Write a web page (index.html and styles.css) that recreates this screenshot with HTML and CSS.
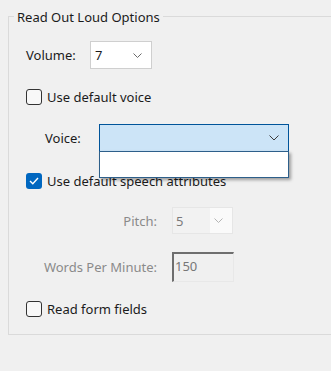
FILE: index.html
```html
<!DOCTYPE html>
<html lang="en">
<head>
    <meta charset="UTF-8">
    <title>Read Out Loud Options</title>
    <link rel="stylesheet" href="styles.css">
</head>
<body>
    <div class="group">
        <div class="legend">Read Out Loud Options</div>

        <div class="row volume">
            <span class="label">Volume:</span>
            <div class="combo combo-volume">
                <span>7</span>
                <svg class="chev" width="9" height="5" viewBox="0 0 9 5"><polyline points="0.5,0.5 4.5,4.5 8.5,0.5" fill="none" stroke="#6a6a6a" stroke-width="1"/></svg>
            </div>
        </div>

        <div class="row check">
            <span class="box"></span>
            <span>Use default voice</span>
        </div>

        <div class="row voice">
            <span class="label">Voice:</span>
            <div class="combo combo-voice">
                <span></span>
                <svg class="chev" width="10" height="6" viewBox="0 0 10 6"><polyline points="0.5,0.5 5,5 9.5,0.5" fill="none" stroke="#3c3c3c" stroke-width="1"/></svg>
                <!-- open list of the voice dropdown -->
                <div class="popup"></div>
            </div>
        </div>

        <div class="row check">
            <span class="box checked">
                <svg width="10" height="8" viewBox="0 0 10 8"><polyline points="1,4 3.8,6.8 9,1" fill="none" stroke="#fff" stroke-width="1.4"/></svg>
            </span>
            <span>Use default speech attributes</span>
        </div>

        <div class="row pitch">
            <span class="label dim">Pitch:</span>
            <div class="combo combo-pitch">
                <span class="val">5</span>
                <svg class="chev" width="9" height="5" viewBox="0 0 9 5"><polyline points="0.5,0.5 4.5,4.5 8.5,0.5" fill="none" stroke="#b4b4b4" stroke-width="1"/></svg>
            </div>
        </div>

        <div class="row wpm">
            <span class="label dim">Words Per Minute:</span>
            <div class="field">150</div>
        </div>

        <div class="row check last">
            <span class="box"></span>
            <span>Read form fields</span>
        </div>
    </div>
</body>
</html>
```

FILE: styles.css
```css
* {
    margin: 0;
    padding: 0;
    box-sizing: border-box;
}

body {
    background-color: #f0f0f0;
    font-family: 'Noto Sans', 'Open Sans', sans-serif;
    font-size: 13px;
    color: #1b1b1b;
    width: 331px;
    height: 371px;
    overflow: hidden;
}

.group {
    margin: 16px 0 0 8px;
    height: 319px;
    border: 1px solid #dadada;
    border-right: none;
}

.legend {
    width: max-content;
    margin: -9px 0 0 5px;
    padding: 0 3px;
    line-height: 18px;
    background-color: #f0f0f0;
}

.row {
    display: flex;
    align-items: center;
    margin-left: 17px;
}

.volume {
    margin-top: 15px;
    height: 28px;
}

.volume .label {
    width: 64px;
}

.combo {
    position: relative;
    display: flex;
    align-items: center;
    justify-content: space-between;
    height: 100%;
    border: 1px solid #cfcfcf;
    background-color: #fff;
    padding: 0 9px 0 4px;
}

.combo-volume {
    width: 62px;
}

.check {
    height: 16px;
    gap: 5px;
}

.check:nth-of-type(3) {
    margin-top: 20px;
}

.box {
    display: flex;
    align-items: center;
    justify-content: center;
    width: 16px;
    height: 16px;
    border: 1px solid #333;
    border-radius: 3px;
    background-color: #f8f8f8;
}

.box.checked {
    border: none;
    background-color: #0067c0;
}

.voice {
    margin-top: 19px;
    height: 28px;
    margin-left: 36px;
}

.voice .label {
    width: 54px;
}

.combo-voice {
    width: 190px;
    border-color: #00549a;
    background-color: #cce4f7;
    padding-right: 9px;
}

.popup {
    position: absolute;
    left: -1px;
    top: 26px;
    width: 190px;
    height: 27px;
    background-color: #fff;
    border: 1px solid #2d5f8a;
    box-shadow: 2px 2px 3px rgba(0, 0, 0, 0.35);
}

.voice + .check {
    margin-top: 21px;
}

.dim {
    color: #8a8a8a;
}

.pitch {
    margin-top: 18px;
    height: 27px;
}

.pitch .label,
.wpm .label {
    width: 130px;
    margin-left: 1px;
    text-align: right;
}

.combo-pitch {
    width: 61px;
    margin-left: 15px;
    padding: 0 0 0 0;
    border-color: #e6e6e6;
    background-color: #fafafa;
}

.combo-pitch .val {
    display: flex;
    align-items: center;
    width: 37px;
    height: 100%;
    padding-left: 3px;
    background-color: #f2f2f2;
    color: #7a7a7a;
}

.combo-pitch .chev {
    margin-right: 9px;
}

.wpm {
    margin-top: 18px;
    height: 30px;
}

.field {
    width: 62px;
    height: 100%;
    margin-left: 15px;
    padding: 3px 0 0 1px;
    border-top: 2px solid #6e6e6e;
    border-left: 2px solid #6e6e6e;
    border-right: 1px solid #e8e8e8;
    border-bottom: 1px solid #e8e8e8;
    background-color: #f0f0f0;
    color: #777;
}

.last {
    margin-top: 19px;
}
```
